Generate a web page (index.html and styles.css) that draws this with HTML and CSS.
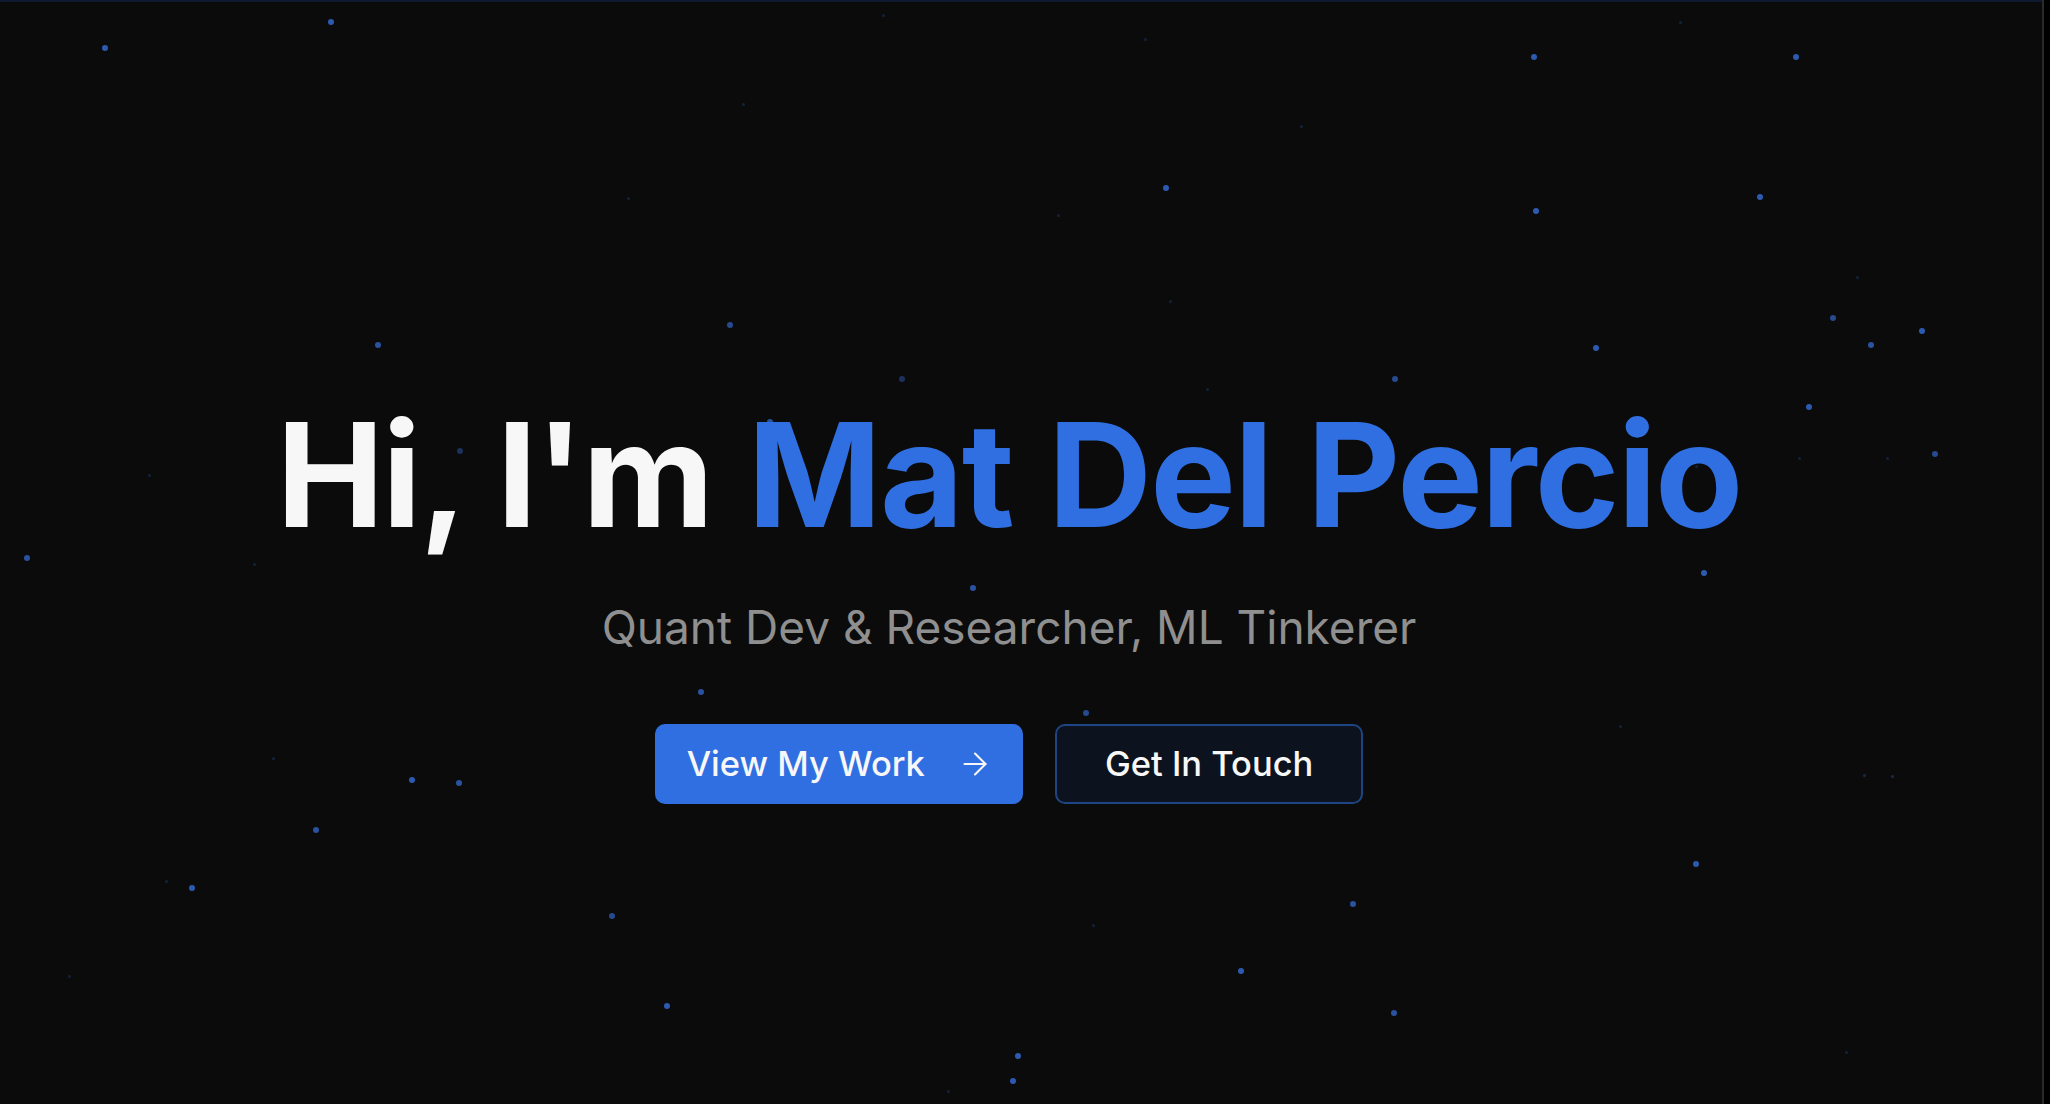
FILE: index.html
```html
<!DOCTYPE html>
<html lang="en">
<head>
    <meta charset="UTF-8">
    <meta name="viewport" content="width=device-width, initial-scale=1.0">
    <title>Mat Del Percio</title>
    <link rel="stylesheet" href="styles.css">
</head>
<body>
    <section class="hero">
        <div class="starfield" id="starfield"></div>

        <div class="hero-content">
            <h1 class="hero-title">Hi, I'm <span class="accent">Mat Del Percio</span></h1>
            <p class="hero-subtitle">Quant Dev &amp; Researcher, ML Tinkerer</p>

            <div class="hero-actions">
                <a class="btn btn-primary" href="#projects">
                    <span>View My Work</span>
                    <svg class="btn-icon" viewBox="0 0 24 24" fill="none" stroke="currentColor" stroke-width="1.4" stroke-linecap="round" stroke-linejoin="round">
                        <path d="M5 12h14"/>
                        <path d="m12 5 7 7-7 7"/>
                    </svg>
                </a>
                <a class="btn btn-outline" href="#contact">Get In Touch</a>
            </div>
        </div>
    </section>

    <div class="scroll-track"></div>

    <script>
        // Star positions: [x, y, opacity]
        const stars = [
            [105, 46, 1], [331, 20, 1], [1534, 55, 1], [1796, 55, 1],
            [1166, 186, 1], [1536, 209, 1], [1760, 195, 1], [730, 323, 0.8],
            [378, 343, 0.9], [1596, 346, 1], [1833, 316, 0.8], [1871, 343, 0.9],
            [1922, 329, 1], [1395, 377, 0.8], [902, 377, 0.5], [1809, 405, 1],
            [770, 420, 0.9], [1935, 452, 0.8], [460, 449, 0.5], [27, 556, 0.9],
            [1704, 571, 1], [973, 586, 0.9], [701, 690, 0.9], [1086, 711, 0.8],
            [412, 778, 1], [459, 781, 0.9], [316, 828, 0.9], [1696, 862, 1],
            [192, 886, 1], [1353, 902, 0.9], [612, 914, 0.8], [1241, 969, 1],
            [667, 1004, 1], [1394, 1011, 0.9], [1018, 1054, 1], [1013, 1079, 1],
            [1864, 773, 0.4], [1892, 774, 0.4],
            // faint ones
            [149, 473, 0.3], [1170, 299, 0.3], [1207, 387, 0.3], [1799, 456, 0.3],
            [1887, 456, 0.3], [1620, 724, 0.3], [273, 756, 0.3], [166, 879, 0.3],
            [1093, 923, 0.3], [1846, 1050, 0.3], [69, 974, 0.3], [948, 1089, 0.3],
            [254, 562, 0.3], [628, 196, 0.3], [743, 102, 0.3], [1058, 213, 0.3],
            [1301, 124, 0.3], [1857, 275, 0.3], [1680, 20, 0.3], [1145, 37, 0.3],
            [883, 13, 0.3], [1696, 464, 0.3]
        ];

        const field = document.getElementById('starfield');

        stars.forEach(([x, y, o]) => {
            const star = document.createElement('span');
            star.className = 'star';
            star.style.left = x + 'px';
            star.style.top = y + 'px';
            star.style.opacity = o;
            if (o < 0.5) star.classList.add('star-small');
            field.appendChild(star);
        });
    </script>
</body>
</html>
```

FILE: styles.css
```css
* {
    margin: 0;
    padding: 0;
    box-sizing: border-box;
}

body {
    font-family: Inter, "Noto Sans", sans-serif;
    background: #0b0b0b;
    color: #f7f7f7;
    overflow: hidden;
}

.hero {
    position: relative;
    min-height: 100vh;
    border-top: 2px solid #0e1a2f;
    display: flex;
    align-items: center;
    justify-content: center;
    padding: 101px 32px 0 0;
}

.starfield {
    position: absolute;
    inset: 0;
    pointer-events: none;
}

.star {
    position: absolute;
    width: 6px;
    height: 6px;
    margin: -3px 0 0 -3px;
    border-radius: 50%;
    background: #2c5ab0;
}

.star-small {
    width: 3px;
    height: 3px;
    margin: -1px 0 0 -1px;
}

.hero-content {
    position: relative;
    display: flex;
    flex-direction: column;
    align-items: center;
    text-align: center;
}

.hero-title {
    font-size: 144px;
    font-weight: 700;
    line-height: 1;
    letter-spacing: -0.012em;
    word-spacing: 0.02em;
    color: #f7f7f7;
}

.hero-title .accent {
    color: #2f6fe2;
}

.hero-subtitle {
    margin-top: 46px;
    font-size: 46px;
    font-weight: 400;
    line-height: 1.5;
    color: #8f8f8f;
}

.hero-actions {
    margin-top: 62px;
    display: flex;
    gap: 32px;
}

.btn {
    display: inline-flex;
    align-items: center;
    height: 80px;
    border-radius: 10px;
    font-size: 34.5px;
    font-weight: 500;
    line-height: 40px;
    color: #f7f7f7;
    text-decoration: none;
}

.btn-primary {
    background: #2f6fe2;
    padding: 20px 30px 20px 32px;
    gap: 32px;
}

.btn-icon {
    width: 36px;
    height: 36px;
}

.btn-outline {
    background: #0d131e;
    border: 2px solid #1d4483;
    padding: 18px 48px;
}

.scroll-track {
    position: fixed;
    top: 0;
    right: 0;
    bottom: 0;
    width: 8px;
    background: #000;
    border-left: 2px solid #2a2a2a;
}
```
